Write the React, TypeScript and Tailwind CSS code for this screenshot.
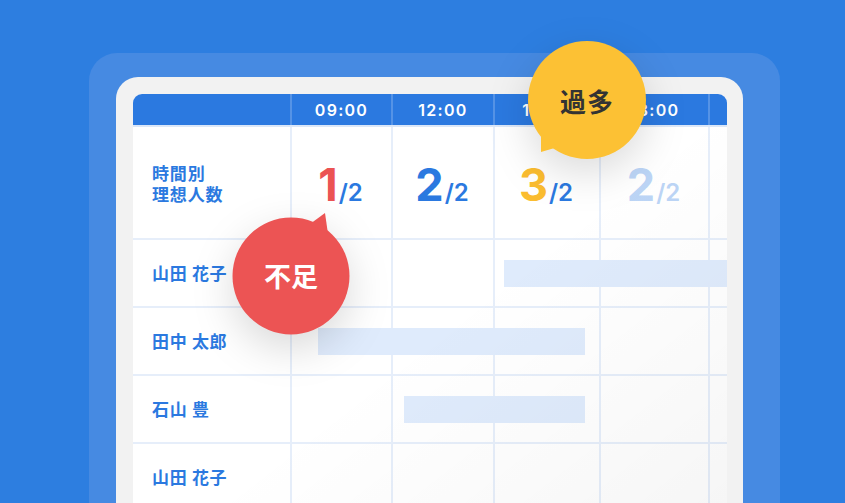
import React from "react";

const cols = "grid grid-cols-[157px_101px_102px_106px_109px_19px]";
const jp = "font-['Noto_Sans_CJK_JP','Noto_Sans',sans-serif]";
const num = "font-['Inter','Noto_Sans',sans-serif]";

const times = ["09:00", "12:00", "15:00", "18:00", ""];

const counts = [
  { n: "1", nc: "text-[#eb5353]", sc: "text-[#2b79e0]" },
  { n: "2", nc: "text-[#2b79e0]", sc: "text-[#2b79e0]" },
  { n: "3", nc: "text-[#fbbd30]", sc: "text-[#2b79e0]" },
  { n: "2", nc: "text-[#bcd5f6]", sc: "text-[#bcd5f6]" },
];

function Cells() {
  return (
    <>
      {[2, 3, 4, 5, 6].map((c) => (
        <div
          key={c}
          className={`row-start-1 border-l-2 border-[#e6eefa] ${
            c === 2 ? "col-start-2" : c === 3 ? "col-start-3" : c === 4 ? "col-start-4" : c === 5 ? "col-start-5" : "col-start-6"
          }`}
        />
      ))}
    </>
  );
}

function NameRow({ name, bar }: { name: string; bar?: string }) {
  return (
    <div className={`${cols} h-[68px] border-b-2 border-[#e6eefa]`}>
      <div className={`row-start-1 col-start-1 flex items-center pl-[19px] text-[17px] font-bold tracking-[0.04em] text-[#2b79e0] ${jp}`}>
        {name}
      </div>
      <Cells />
      {bar && <div className={`row-start-1 self-center h-[27px] bg-[#dfebfc] ${bar}`} />}
    </div>
  );
}

export default function App() {
  return (
    <div className="relative w-[845px] h-[503px] overflow-hidden bg-[#2d7ee0]">
      <div className="ml-[89px] mt-[53px] w-[691px] h-[500px] rounded-[28px] bg-[#468ae2] pl-[27px] pr-[37px] pt-[24px]">
        <div className="h-[480px] rounded-[22px] bg-[#f2f2f2] pl-[17px] pr-[16px] pt-[17px]">
          <div className="relative h-full overflow-hidden rounded-t-[9px] bg-white">
            {/* header */}
            <div className={`${cols} h-[31px] bg-[#2b79e0]`}>
              <div />
              {times.map((t, i) => (
                <div
                  key={i}
                  className={`flex items-center justify-center border-l-2 border-white/20 text-[16px] font-semibold tracking-[0.08em] text-white ${num}`}
                >
                  {t}
                </div>
              ))}
            </div>
            <div className="h-[2px] bg-[#dbe7f8]" />

            {/* ideal count row */}
            <div className={`${cols} h-[113px] border-b-2 border-[#e6eefa]`}>
              <div className={`row-start-1 col-start-1 flex flex-col justify-center pl-[19px] text-[17px] leading-[21px] font-bold tracking-[0.05em] text-[#2b79e0] ${jp}`}>
                <span>時間別</span>
                <span>理想人数</span>
              </div>
              <Cells />
              {counts.map((c, i) => (
                <div
                  key={i}
                  className={`row-start-1 flex items-center justify-center pt-[3px] ${num} ${
                    i === 0 ? "col-start-2" : i === 1 ? "col-start-3" : i === 2 ? "col-start-4" : "col-start-5"
                  }`}
                >
                  <div className="flex items-baseline">
                    <span className={`text-[45px] leading-none font-bold ${c.nc}`}>{c.n}</span>
                    <span className={`ml-[1px] text-[24px] leading-none font-semibold ${c.sc}`}>/2</span>
                  </div>
                </div>
              ))}
            </div>

            <NameRow name="山田 花子" bar="col-start-4 col-end-7 ml-[11px]" />
            <NameRow name="田中 太郎" bar="col-start-2 col-end-5 ml-[28px] mr-[14px]" />
            <NameRow name="石山 豊" bar="col-start-3 col-end-5 ml-[13px] mr-[14px]" />
            <NameRow name="山田 花子" />

            {/* light sheen */}
            <div className="pointer-events-none absolute inset-0 bg-gradient-to-br from-transparent via-transparent to-black/[0.04]" />
          </div>
        </div>
      </div>

      {/* 不足 bubble */}
      <div className="absolute left-[230px] top-[208px] w-[124px] h-[130px]">
        <svg
          width="124"
          height="130"
          viewBox="0 0 124 130"
          className="absolute inset-0 overflow-visible drop-shadow-[0_14px_20px_rgba(0,0,0,0.15)]"
        >
          <circle cx="61" cy="68" r="58.5" fill="#ec5454" />
          <path d="M80 16 L95 5 L98 26 Z" fill="#ec5454" />
        </svg>
        <div className={`absolute left-0 top-[10px] w-[122px] h-[117px] flex items-center justify-center text-[27px] font-bold text-white ${jp}`}>
          不足
        </div>
      </div>

      {/* 過多 bubble */}
      <div className="absolute left-[525px] top-[38px] w-[125px] h-[122px]">
        <svg
          width="125"
          height="122"
          viewBox="0 0 125 122"
          className="absolute inset-0 overflow-visible drop-shadow-[0_14px_20px_rgba(0,0,0,0.14)]"
        >
          <circle cx="62" cy="62" r="59" fill="#fcc134" />
          <path d="M16 95 L16 114 L33 109 Z" fill="#fcc134" />
        </svg>
        <div className={`absolute left-[3px] top-[3px] w-[118px] h-[118px] flex items-center justify-center text-[26px] font-bold tracking-[0.04em] text-[#333] ${jp}`}>
          過多
        </div>
      </div>
    </div>
  );
}
